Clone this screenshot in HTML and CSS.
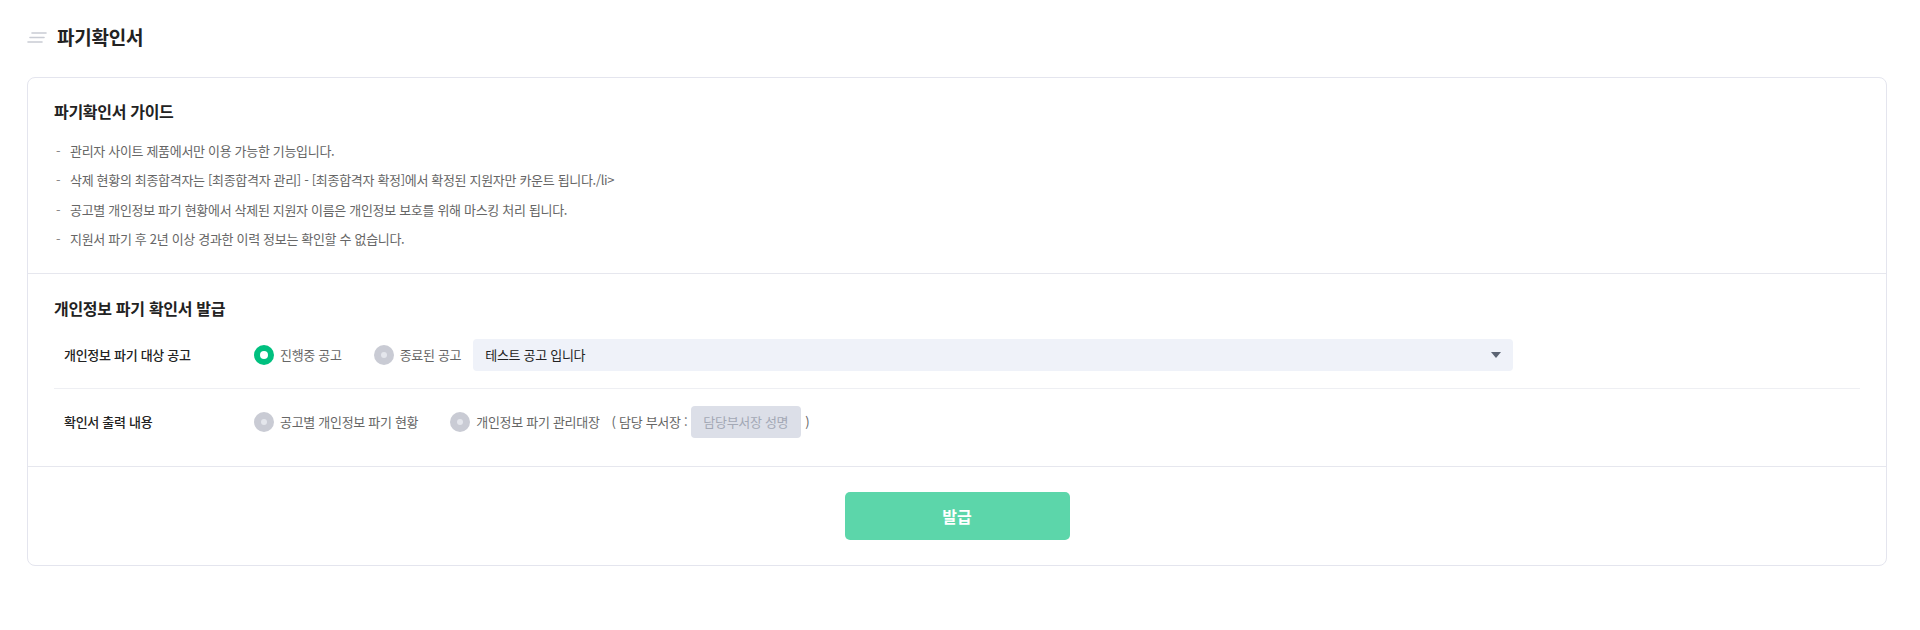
FILE: index.html
```html
<!DOCTYPE html>
<html lang="ko">
<head>
<meta charset="utf-8">
<title>파기확인서</title>
<link rel="stylesheet" href="styles.css">
</head>
<body>
<div class="page">
  <header class="page-head">
    <svg class="head-icon" width="20" height="12" viewBox="0 0 20 12" aria-hidden="true">
      <line x1="5" y1="1" x2="19" y2="1" stroke="#c9ccd4" stroke-width="1.6" stroke-linecap="round"/>
      <line x1="3" y1="5.5" x2="17" y2="5.5" stroke="#c9ccd4" stroke-width="1.6" stroke-linecap="round"/>
      <line x1="1" y1="10" x2="15" y2="10" stroke="#c9ccd4" stroke-width="1.6" stroke-linecap="round"/>
    </svg>
    <h1 class="page-title">파기확인서</h1>
  </header>

  <div class="card">
    <section class="guide">
      <h2 class="sec-title">파기확인서 가이드</h2>
      <ul class="guide-list">
        <li><span class="dash">-</span>관리자 사이트 제품에서만 이용 가능한 기능입니다.</li>
        <li><span class="dash">-</span>삭제 현황의 최종합격자는 [최종합격자 관리] - [최종합격자 확정]에서 확정된 지원자만 카운트 됩니다./li&gt;</li>
        <li><span class="dash">-</span>공고별 개인정보 파기 현황에서 삭제된 지원자 이름은 개인정보 보호를 위해 마스킹 처리 됩니다.</li>
        <li><span class="dash">-</span>지원서 파기 후 2년 이상 경과한 이력 정보는 확인할 수 없습니다.</li>
      </ul>
    </section>

    <section class="issue">
      <h2 class="sec-title">개인정보 파기 확인서 발급</h2>
      <div class="row row-first">
        <div class="row-label">개인정보 파기 대상 공고</div>
        <div class="row-body">
          <label class="opt"><span class="radio on"></span><span class="opt-text">진행중 공고</span></label>
          <label class="opt"><span class="radio"></span><span class="opt-text">종료된 공고</span></label>
          <div class="select">
            <span class="select-text">테스트 공고 입니다</span>
            <span class="caret"></span>
          </div>
        </div>
      </div>
      <div class="row">
        <div class="row-label">확인서 출력 내용</div>
        <div class="row-body">
          <label class="opt"><span class="radio"></span><span class="opt-text">공고별 개인정보 파기 현황</span></label>
          <label class="opt opt-tight"><span class="radio"></span><span class="opt-text">개인정보 파기 관리대장</span></label>
          <span class="paren">( 담당 부서장 :</span>
          <div class="input">담당부서장 성명</div>
          <span class="paren">)</span>
        </div>
      </div>
    </section>

    <div class="actions">
      <button class="btn" type="button">발급</button>
    </div>
  </div>
</div>
</body>
</html>
```

FILE: styles.css
```css
* { box-sizing: border-box; }
html, body { margin: 0; padding: 0; background: #ffffff; }
body {
  font-family: "Noto Sans CJK KR", "Noto Sans", sans-serif;
  color: #222;
}
.page { padding: 0 33px 40px 27px; }

.page-head {
  display: flex;
  align-items: center;
  height: 26px;
  margin-top: 24px;
  margin-bottom: 27px;
}
.head-icon { display: block; margin-right: 10px; margin-top: 2px; }
.page-title {
  margin: 0;
  font-size: 19px;
  font-weight: 700;
  line-height: 26px;
  color: #222;
  letter-spacing: -0.2px;
}

.card {
  border: 1px solid #e4e5ee;
  border-radius: 8px;
  background: #fff;
}

.sec-title {
  margin: 0;
  font-size: 16px;
  font-weight: 700;
  line-height: 24px;
  color: #222;
  letter-spacing: -0.3px;
}

.guide {
  padding: 21px 26px 19px;
  border-bottom: 1px solid #e6e7ee;
}
.guide-list {
  list-style: none;
  margin: 13px 0 0;
  padding: 0;
}
.guide-list li {
  display: flex;
  font-size: 13px;
  line-height: 29.4px;
  color: #666;
  letter-spacing: -0.32px;
}
.dash { width: 16px; padding-left: 2px; color: #888; }

.issue {
  padding: 22px 26px 11px;
  border-bottom: 1px solid #e6e7ee;
}
.row {
  display: flex;
  align-items: center;
  padding: 17px 0 17px 10px;
}
.row-first { margin-top: 2px; border-bottom: 1px solid #eeeff3; }
.row-label {
  width: 190px;
  flex: none;
  font-size: 13px;
  font-weight: 500;
  color: #222;
  letter-spacing: -0.3px;
}
.row-body {
  display: flex;
  align-items: center;
  height: 32px;
}
.opt {
  display: flex;
  align-items: center;
  margin-right: 32px;
}
.opt-tight { margin-right: 12px; }
.radio {
  width: 20px;
  height: 20px;
  border-radius: 50%;
  background: #c9cbd4;
  display: flex;
  align-items: center;
  justify-content: center;
  flex: none;
}
.radio::after {
  content: "";
  width: 6px;
  height: 6px;
  border-radius: 50%;
  background: #e4e6ec;
}
.radio.on { background: #00c07f; }
.radio.on::after { width: 8px; height: 8px; background: #fff; }
.opt-text {
  margin-left: 6px;
  font-size: 13px;
  color: #666;
  letter-spacing: -0.3px;
}
.opt + .select { margin-left: -20px; }

.select {
  width: 1040px;
  height: 32px;
  background: #eff2f9;
  border-radius: 4px;
  display: flex;
  align-items: center;
  justify-content: space-between;
  padding: 0 12px;
}
.select-text { font-size: 13px; font-weight: 400; color: #222; letter-spacing: -0.3px; }
.caret {
  width: 0;
  height: 0;
  border-left: 5px solid transparent;
  border-right: 5px solid transparent;
  border-top: 6px solid #5b6473;
  margin-right: 0;
}

.paren { font-size: 13px; color: #666; letter-spacing: -0.3px; }
.input {
  width: 110px;
  height: 32px;
  margin: 0 4px;
  border-radius: 4px;
  background: #dcdfe8;
  color: #a3a8b5;
  font-size: 13px;
  line-height: 32px;
  padding-left: 12px;
  letter-spacing: -0.3px;
}

.actions {
  display: flex;
  justify-content: center;
  padding: 25px 0;
}
.btn {
  width: 225px;
  height: 48px;
  border: 0;
  border-radius: 5px;
  background: #5cd6aa;
  color: #fff;
  font-family: inherit;
  font-size: 16px;
  font-weight: 700;
}
```
